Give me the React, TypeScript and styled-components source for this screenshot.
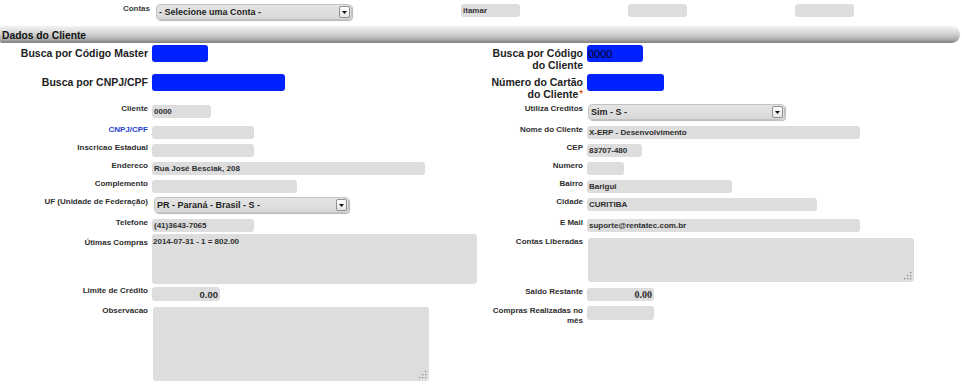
import React from 'react';
import styled, { createGlobalStyle } from 'styled-components';

const Global = createGlobalStyle`
  html, body { margin: 0; padding: 0; background: #ffffff; }
  body { font-family: "Liberation Sans", Arial, sans-serif; }
`;

const FONT = `"Liberation Sans", Arial, sans-serif`;

const Page = styled.div`
  width: 962px;
  height: 385px;
  overflow: hidden;
`;

const TopBar = styled.div`
  display: flex;
  align-items: flex-start;
  gap: 108px;
  padding-top: 4px;
  height: 16px;
`;

const ContaGroup = styled.div`
  display: flex;
  align-items: flex-start;
`;

const TopLabel = styled.label`
  width: 150px;
  margin-right: 6px;
  text-align: right;
  font: bold 8px/10px ${FONT};
  color: #3a3a3a;
`;

const TopInput = styled.input<{ $ml?: number }>`
  width: 59px;
  height: 13px;
  margin: 0 0 0 ${p => p.$ml ?? 0}px;
  box-sizing: border-box;
  border: none;
  border-radius: 3px;
  background: #dddddd;
  padding: 0 2px;
  font: bold 8px ${FONT};
  color: #333;
  outline: none;
`;

const SelectBox = styled.div<{ $w: number; $ml?: number }>`
  width: ${p => p.$w}px;
  height: 16px;
  margin-left: ${p => p.$ml ?? 0}px;
  box-sizing: border-box;
  display: flex;
  align-items: center;
  justify-content: space-between;
  padding: 0 1px 0 2px;
  background: linear-gradient(#e4e4e4, #d9d9d9);
  border: 1px solid #c2c2c2;
  border-radius: 4px;
  box-shadow: 1px 1px 1px rgba(0, 0, 0, 0.28);
  font: bold 9px ${FONT};
  color: #1e1e1e;
`;

const SelectArrow = styled.span`
  width: 11px;
  height: 12px;
  box-sizing: border-box;
  border: 1px solid #8f8f8f;
  border-radius: 2px;
  background: linear-gradient(#ffffff, #e6e6e6);
  display: flex;
  align-items: center;
  justify-content: center;
`;

const SectionHeader = styled.div`
  width: 960px;
  height: 17px;
  margin-top: 6px;
  box-sizing: border-box;
  padding: 3px 0 0 2px;
  border-radius: 2px 9px 9px 2px;
  background: linear-gradient(
    to bottom,
    #f3f3f3 0%,
    #e2e2e2 25%,
    #cacaca 55%,
    #aaaaaa 80%,
    #7f7f7f 100%
  );
  font: bold 10.3px/13px ${FONT};
  color: #111;
`;

const Columns = styled.div`
  display: grid;
  grid-template-columns: 487px 1fr;
`;

const Column = styled.div`
  display: flex;
  flex-direction: column;
`;

const Row = styled.div<{ $mt: number; $h: number; $lw: number }>`
  display: grid;
  grid-template-columns: ${p => p.$lw}px auto;
  column-gap: 4px;
  align-items: start;
  justify-content: start;
  margin-top: ${p => p.$mt}px;
  height: ${p => p.$h}px;
`;

const Label = styled.label<{ $lt?: number; $link?: boolean }>`
  text-align: right;
  font: bold 8px/10px ${FONT};
  color: ${p => (p.$link ? '#2342d0' : '#2e2e2e')};
  margin-top: ${p => p.$lt ?? -1}px;
`;

const BigLabel = styled.label`
  text-align: right;
  font: bold 10.5px/12px ${FONT};
  color: #222;
  margin-top: 2px;
`;

const Req = styled.span`
  margin-left: 1px;
  font-size: 9.5px;
  vertical-align: 2px;
  line-height: 8px;
  color: #e0561e;
`;

const Field = styled.input<{ $w: number; $h?: number; $right?: boolean; $num?: 'sans' | 'serif' }>`
  width: ${p => p.$w}px;
  height: ${p => p.$h ?? 13}px;
  margin: 0;
  box-sizing: border-box;
  border: none;
  border-radius: 3px;
  background: #dddddd;
  padding: 0 2px;
  text-align: ${p => (p.$right ? 'right' : 'left')};
  font: bold ${p => (p.$num === 'serif' ? '10px "Liberation Serif", "Times New Roman", serif' : p.$num === 'sans' ? `9.5px ${FONT}` : `8px ${FONT}`)};
  color: #2e2e2e;
  outline: none;
`;

const BlueField = styled.input<{ $w: number }>`
  width: ${p => p.$w}px;
  height: 17px;
  margin: 0;
  box-sizing: border-box;
  border: none;
  border-radius: 3px;
  background: #0022ff;
  padding: 0 1px;
  font: 11px ${FONT};
  color: #000;
  outline: none;
`;

const TextBox = styled.div<{ $w: number; $h: number; $ml?: number }>`
  position: relative;
  width: ${p => p.$w}px;
  height: ${p => p.$h}px;
  margin-left: ${p => p.$ml ?? 0}px;
`;

const TextArea = styled.textarea`
  display: block;
  width: 100%;
  height: 100%;
  margin: 0;
  box-sizing: border-box;
  border: none;
  border-radius: 3px;
  background: #dddddd;
  padding: 3px 1px;
  resize: none;
  font: bold 8px/10px ${FONT};
  color: #2e2e2e;
  outline: none;
  overflow: hidden;
`;

const GripMark = styled.svg`
  position: absolute;
  right: 1px;
  bottom: 1px;
`;

const Grip = () => (
  <GripMark width="10" height="10" viewBox="0 0 10 10">
    {[
      [7, 1],
      [4, 4],
      [7, 4],
      [1, 7],
      [4, 7],
      [7, 7],
    ].map(([x, y]) => (
      <g key={`${x}-${y}`}>
        <rect x={x + 0.7} y={y + 0.7} width="1.6" height="1.6" fill="#ffffff" />
        <rect x={x} y={y} width="1.6" height="1.6" fill="#9a9a9a" />
      </g>
    ))}
  </GripMark>
);

const Select = ({ w, ml, text }: { w: number; ml?: number; text: string }) => (
  <SelectBox $w={w} $ml={ml}>
    <span>{text}</span>
    <SelectArrow>
      <svg width="5" height="3" viewBox="0 0 5 3">
        <path d="M0 0h5L2.5 3z" fill="#111" />
      </svg>
    </SelectArrow>
  </SelectBox>
);

const L = 148;
const R = 96;

export default function App() {
  return (
    <Page>
      <Global />
      <TopBar>
        <ContaGroup>
          <TopLabel>Contas</TopLabel>
          <Select w={196} text="- Selecione uma Conta -" />
        </ContaGroup>
        <TopInput $ml={1} readOnly value="itamar" />
        <TopInput readOnly value="" />
        <TopInput readOnly value="" />
      </TopBar>

      <SectionHeader>Dados do Cliente</SectionHeader>

      <Columns>
        <Column>
          <Row $lw={L} $mt={2} $h={17}>
            <BigLabel>Busca por Código Master</BigLabel>
            <BlueField $w={56} readOnly value="" />
          </Row>
          <Row $lw={L} $mt={12} $h={17}>
            <BigLabel>Busca por CNPJ/CPF</BigLabel>
            <BlueField $w={133} readOnly value="" />
          </Row>
          <Row $lw={L} $mt={14} $h={13}>
            <Label>Cliente</Label>
            <Field $w={59} readOnly value="0000" />
          </Row>
          <Row $lw={L} $mt={8} $h={13}>
            <Label $link>CNPJ/CPF</Label>
            <Field $w={102} readOnly value="" />
          </Row>
          <Row $lw={L} $mt={5} $h={13}>
            <Label>Inscricao Estadual</Label>
            <Field $w={102} readOnly value="" />
          </Row>
          <Row $lw={L} $mt={5} $h={13}>
            <Label>Endereco</Label>
            <Field $w={273} readOnly value="Rua José Besciak, 208" />
          </Row>
          <Row $lw={L} $mt={5} $h={13}>
            <Label>Complemento</Label>
            <Field $w={145} readOnly value="" />
          </Row>
          <Row $lw={L} $mt={4} $h={16}>
            <Label $lt={0}>UF (Unidade de Federação)</Label>
            <Select w={195} ml={2} text="PR - Paraná - Brasil - S -" />
          </Row>
          <Row $lw={L} $mt={6} $h={13}>
            <Label>Telefone</Label>
            <Field $w={102} readOnly value="(41)3643-7065" />
          </Row>
          <Row $lw={L} $mt={2} $h={50}>
            <Label $lt={4}>Útimas Compras</Label>
            <TextBox $w={325} $h={50}>
              <TextArea readOnly value="2014-07-31 - 1 = 802.00" />
            </TextBox>
          </Row>
          <Row $lw={L} $mt={3} $h={14}>
            <Label>Limite de Crédito</Label>
            <Field $w={68} $h={14} $right $num="sans" readOnly value="0.00" />
          </Row>
          <Row $lw={L} $mt={6} $h={74}>
            <Label>Observacao</Label>
            <TextBox $w={276} $h={74} $ml={1}>
              <TextArea readOnly value="" />
              <Grip />
            </TextBox>
          </Row>
        </Column>

        <Column>
          <Row $lw={R} $mt={2} $h={17}>
            <BigLabel>Busca por Código do Cliente</BigLabel>
            <BlueField $w={56} readOnly value="0000" />
          </Row>
          <Row $lw={R} $mt={12} $h={17}>
            <BigLabel>
              Número do Cartão do Cliente<Req>*</Req>
            </BigLabel>
            <BlueField $w={77} readOnly value="" />
          </Row>
          <Row $lw={R} $mt={13} $h={16}>
            <Label $lt={0}>Utiliza Creditos</Label>
            <Select w={197} ml={1} text="Sim - S -" />
          </Row>
          <Row $lw={R} $mt={6} $h={13}>
            <Label>Nome do Cliente</Label>
            <Field $w={273} readOnly value="X-ERP - Desenvolvimento" />
          </Row>
          <Row $lw={R} $mt={5} $h={13}>
            <Label>CEP</Label>
            <Field $w={55} readOnly value="83707-480" />
          </Row>
          <Row $lw={R} $mt={5} $h={13}>
            <Label>Numero</Label>
            <Field $w={37} readOnly value="" />
          </Row>
          <Row $lw={R} $mt={5} $h={13}>
            <Label>Bairro</Label>
            <Field $w={145} readOnly value="Barigui" />
          </Row>
          <Row $lw={R} $mt={5} $h={13}>
            <Label>Cidade</Label>
            <Field $w={230} readOnly value="CURITIBA" />
          </Row>
          <Row $lw={R} $mt={8} $h={13}>
            <Label>E Mail</Label>
            <Field $w={273} readOnly value="suporte@rentatec.com.br" />
          </Row>
          <Row $lw={R} $mt={6} $h={44}>
            <Label>Contas Liberadas</Label>
            <TextBox $w={326} $h={44} $ml={1}>
              <TextArea readOnly value="" />
              <Grip />
            </TextBox>
          </Row>
          <Row $lw={R} $mt={6} $h={13}>
            <Label>Saldo Restante</Label>
            <Field $w={67} $right $num="serif" readOnly value="0.00" />
          </Row>
          <Row $lw={R} $mt={5} $h={14}>
            <Label $lt={0}>Compras Realizadas no mês</Label>
            <Field $w={67} $h={14} readOnly value="" />
          </Row>
        </Column>
      </Columns>
    </Page>
  );
}
